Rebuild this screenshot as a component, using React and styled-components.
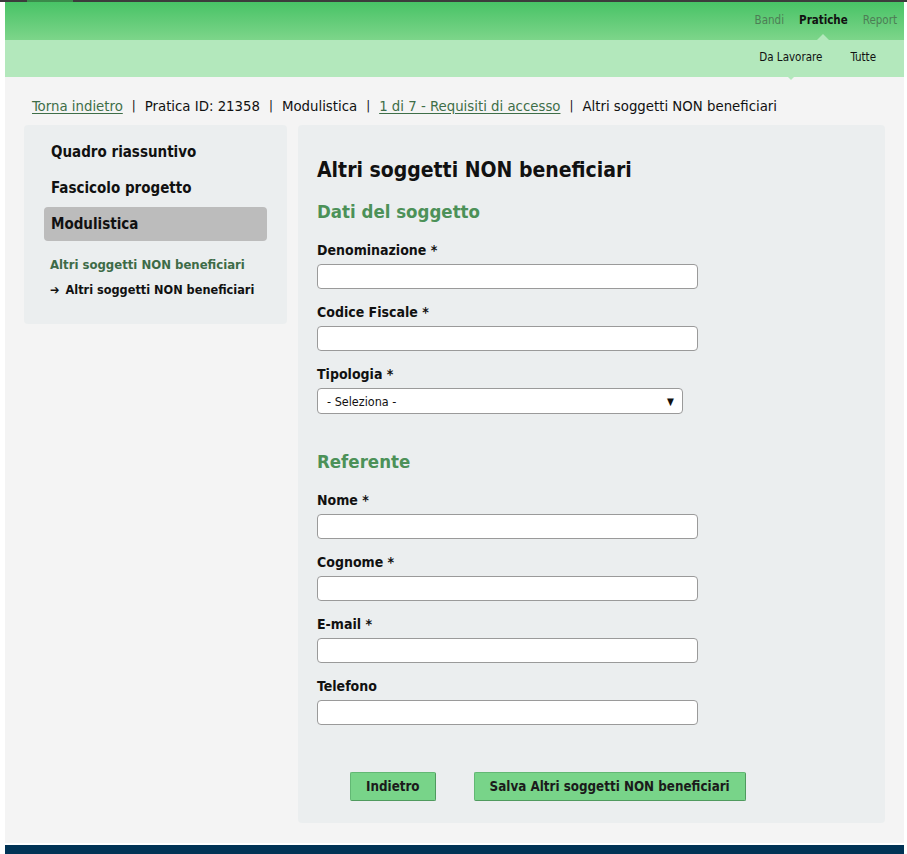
import styled, { createGlobalStyle } from "styled-components";

const FONT = `"DejaVu Sans Condensed", "DejaVu Sans", sans-serif`;

const GlobalStyle = createGlobalStyle`
  html, body {
    margin: 0;
    background: #ffffff;
  }
  body {
    font-family: ${FONT};
    color: #111;
  }
  * {
    box-sizing: border-box;
  }
`;

const TopStrip = styled.div`
  height: 2px;
  background: #3c3c3c;
  display: flex;
  padding-left: 27px;
`;

const TopTab = styled.div`
  width: 46px;
  background: #3a8a4a;
`;

const Frame = styled.div`
  padding: 0 3px 0 5px;
`;

const Header = styled.header`
  height: 38px;
  background: linear-gradient(#48c366, #7dd58a);
  display: flex;
  justify-content: flex-end;
  align-items: center;
  gap: 15px;
  padding: 0 7px 3px 0;
`;

const NavItem = styled.span`
  position: relative;
  font-size: 11.5px;
  color: ${(p) => (p.active ? "#111" : "#4d7d55")};
  font-weight: ${(p) => (p.active ? 600 : 400)};

  &::after {
    content: "";
    display: ${(p) => (p.active ? "block" : "none")};
    position: absolute;
    left: 50%;
    bottom: -14px;
    margin-left: -7px;
    border: 7px solid transparent;
    border-bottom-color: #b3e8bc;
    border-top: 0;
  }
`;

const SubBar = styled.div`
  height: 37px;
  background: #b3e8bc;
  display: flex;
  justify-content: flex-end;
  align-items: center;
  gap: 28px;
  padding: 0 28px 4px 0;
`;

const SubItem = styled.span`
  position: relative;
  font-size: 11.5px;
  color: #111;

  &::after {
    content: "";
    display: ${(p) => (p.active ? "block" : "none")};
    position: absolute;
    left: 50%;
    top: 23px;
    margin-left: -7px;
    border: 7px solid transparent;
    border-top-color: #b3e8bc;
    border-bottom: 0;
  }
`;

const Body = styled.main`
  background: #f4f4f4;
  padding: 16px 19px 20px 19px;
`;

const Crumbs = styled.nav`
  font-size: 14.8px;
  padding-left: 8px;
  height: 24px;
  display: flex;
  align-items: center;
  color: #111;
  margin-bottom: 8px;
`;

const CrumbLink = styled.a`
  color: #3e6e48;
  text-decoration: underline;
  text-underline-offset: 2px;
`;

const Sep = styled.span`
  margin: 0 9px;
  font-size: 13px;
`;

const Columns = styled.div`
  display: flex;
  align-items: flex-start;
  gap: 11px;
`;

const Sidebar = styled.aside`
  width: 263px;
  flex-shrink: 0;
  background: #ebeeef;
  border-radius: 4px;
  padding: 10px 20px 25px;
`;

const MenuItem = styled.div`
  height: 34px;
  margin-bottom: 2px;
  display: flex;
  align-items: center;
  padding-left: 7px;
  font-size: 15px;
  font-weight: bold;
  border-radius: 4px;
  background: ${(p) => (p.active ? "#bcbcbc" : "transparent")};
`;

const SubTitle = styled.div`
  margin-top: 13px;
  padding-left: 6px;
  font-size: 13px;
  font-weight: bold;
  color: #3d6b47;
  height: 20px;
  display: flex;
  align-items: center;
`;

const SubLink = styled.div`
  margin-top: 5px;
  padding-left: 6px;
  font-size: 12.6px;
  font-weight: bold;
  height: 20px;
  display: flex;
  align-items: center;
  gap: 6px;
`;

const Panel = styled.section`
  flex: 1;
  background: #ebeeef;
  border-radius: 4px;
  padding: 30px 19px 21px;
  min-height: 698px;
`;

const Title = styled.h1`
  margin: 0;
  font-size: 21px;
  font-weight: bold;
  height: 30px;
  line-height: 30px;
`;

const Section = styled.h2`
  margin: ${(p) => p.mt}px 0 0;
  font-size: 18.5px;
  font-weight: bold;
  color: #4c9158;
  height: 26px;
  line-height: 26px;
`;

const Label = styled.label`
  display: block;
  margin-top: ${(p) => p.mt ?? 14}px;
  font-size: 14px;
  font-weight: bold;
  height: 18px;
  line-height: 18px;
`;

const Input = styled.input`
  display: block;
  margin-top: 5px;
  width: 381px;
  height: 25px;
  border: 1px solid #9a9a9a;
  border-radius: 4px;
  background: #fff;
  font-family: ${FONT};
`;

const Select = styled.div`
  margin-top: 5px;
  width: 366px;
  height: 26px;
  border: 1px solid #9a9a9a;
  border-radius: 4px;
  background: #fff;
  display: flex;
  align-items: center;
  justify-content: space-between;
  padding: 0 8px 0 9px;
  font-size: 12.5px;
`;

const Caret = styled.span`
  font-size: 10px;
`;

const Actions = styled.div`
  display: flex;
  gap: 38px;
  margin-top: 47px;
  padding-left: 33px;
`;

const Button = styled.button`
  height: 29px;
  padding: 0 15px;
  background: #78d489;
  border: 1px solid #62b874;
  border-bottom-color: #4f9a5e;
  border-right-color: #4f9a5e;
  border-radius: 2px;
  font-family: ${FONT};
  font-size: 13.3px;
  font-weight: 600;
  color: #1b1b1b;
`;

const Footer = styled.footer`
  height: 11px;
  margin-top: 2px;
  background: #003355;
`;

export default function App() {
  return (
    <>
      <GlobalStyle />
      <TopStrip>
        <TopTab />
      </TopStrip>
      <Frame>
        <Header>
          <NavItem>Bandi</NavItem>
          <NavItem active>Pratiche</NavItem>
          <NavItem>Report</NavItem>
        </Header>
        <SubBar>
          <SubItem active>Da Lavorare</SubItem>
          <SubItem>Tutte</SubItem>
        </SubBar>
        <Body>
          <Crumbs>
            <CrumbLink href="#">Torna indietro</CrumbLink>
            <Sep>|</Sep>
            <span>Pratica ID: 21358</span>
            <Sep>|</Sep>
            <span>Modulistica</span>
            <Sep>|</Sep>
            <CrumbLink href="#">1 di 7 - Requisiti di accesso</CrumbLink>
            <Sep>|</Sep>
            <span>Altri soggetti NON beneficiari</span>
          </Crumbs>
          <Columns>
            <Sidebar>
              <MenuItem>Quadro riassuntivo</MenuItem>
              <MenuItem>Fascicolo progetto</MenuItem>
              <MenuItem active>Modulistica</MenuItem>
              <SubTitle>Altri soggetti NON beneficiari</SubTitle>
              <SubLink>
                <span>➔</span>
                <span>Altri soggetti NON beneficiari</span>
              </SubLink>
            </Sidebar>
            <Panel>
              <Title>Altri soggetti NON beneficiari</Title>
              <Section mt={14}>Dati del soggetto</Section>
              <Label mt={16}>Denominazione *</Label>
              <Input />
              <Label>Codice Fiscale *</Label>
              <Input />
              <Label>Tipologia *</Label>
              <Select>
                <span>- Seleziona -</span>
                <Caret>▼</Caret>
              </Select>
              <Section mt={35}>Referente</Section>
              <Label mt={16}>Nome *</Label>
              <Input />
              <Label>Cognome *</Label>
              <Input />
              <Label>E-mail *</Label>
              <Input />
              <Label>Telefono</Label>
              <Input />
              <Actions>
                <Button>Indietro</Button>
                <Button>Salva Altri soggetti NON beneficiari</Button>
              </Actions>
            </Panel>
          </Columns>
        </Body>
        <Footer />
      </Frame>
    </>
  );
}
